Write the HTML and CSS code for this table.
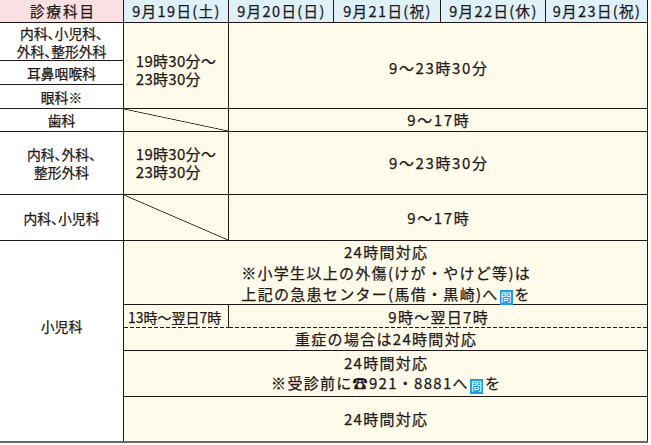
FILE: index.html
```html
<!DOCTYPE html>
<html lang="ja">
<head>
<meta charset="utf-8">
<title>診療科目</title>
<link rel="stylesheet" href="styles.css">
</head>
<body>
<div class="table">
  <div class="cell head dept-head"><span class="t">診療科目</span></div>
  <div class="cell head date"><span class="t">9月19日(土)</span></div>
  <div class="cell head date"><span class="t">9月20日(日)</span></div>
  <div class="cell head date"><span class="t">9月21日(祝)</span></div>
  <div class="cell head date"><span class="t">9月22日(休)</span></div>
  <div class="cell head date"><span class="t">9月23日(祝)</span></div>

  <div class="cell dept r2"><span class="t">内科、小児科、<br>外科、整形外科</span></div>
  <div class="cell dept r3"><span class="t">耳鼻咽喉科</span></div>
  <div class="cell dept r4"><span class="t">眼科※</span></div>
  <div class="cell dept r5"><span class="t">歯科</span></div>
  <div class="cell dept r6"><span class="t">内科、外科、<br>整形外科</span></div>
  <div class="cell dept r7"><span class="t">内科、小児科</span></div>
  <div class="cell dept r8 last shift"><span class="t">小児科</span></div>

  <div class="cell c19 r2to4 night"><span class="t">19時30分～<br>23時30分</span></div>
  <div class="cell wide r2to4 big lower"><span class="t">9～23時30分</span></div>
  <div class="cell c19 r5 diag"></div>
  <div class="cell wide r5 big"><span class="t">9～17時</span></div>
  <div class="cell c19 r6 night"><span class="t">19時30分～<br>23時30分</span></div>
  <div class="cell wide r6 big"><span class="t">9～23時30分</span></div>
  <div class="cell c19 r7 diag"></div>
  <div class="cell wide r7 big"><span class="t">9～17時</span></div>

  <div class="cell full r8 kids three"><span class="t">24時間対応<br>※小学生以上の外傷(けが・やけど等)は<br>上記の急患センター(馬借・黒崎)へ<span class="toi">問</span>を</span></div>
  <div class="cell c19 r9 left dashed"><span class="t">13時～翌日7時</span></div>
  <div class="cell wide r9 kids dashed"><span class="t">9時～翌日7時</span></div>
  <div class="cell full r10 kids"><span class="t">重症の場合は24時間対応</span></div>
  <div class="cell full r11 kids two"><span class="t">24時間対応<br>※受診前に☎921・8881へ<span class="toi">問</span>を</span></div>
  <div class="cell full r12 kids last"><span class="t">24時間対応</span></div>
</div>
</body>
</html>
```
FILE: styles.css
```css
* { box-sizing: border-box; }
html, body { margin: 0; padding: 0; background: #ffffff; }
body {
  font-family: "Noto Sans CJK JP", "Noto Sans", sans-serif;
  color: #231815;
  width: 651px;
  height: 445px;
  overflow: hidden;
}
.table {
  display: grid;
  grid-template-columns: 124px 105px 105px 107px 105px 102px;
  grid-template-rows: 23px 38px 24px 24px 23px 63px 46px 64px 23px 23px 46px 44px;
  width: 648px;
  border-bottom: 2px solid #6a6a6a;
}
.cell {
  border-right: 1px solid #231815;
  border-bottom: 1px solid #231815;
  background: #fffbeb;
  display: flex;
  align-items: center;
  justify-content: center;
  text-align: center;
  font-size: 14px;
  line-height: 18px;
  white-space: nowrap;
  -webkit-text-stroke: 0.25px #231815;
}
.t { display: block; }
.cell.last { border-bottom: none; }

.dept-head {
  background: #fae0e3;
  grid-column: 1;
  grid-row: 1;
  font-size: 14.5px;
  letter-spacing: 2px;
  justify-content: flex-start;
  padding-left: 30px;
}
.date {
  background: #def0f8;
  grid-row: 1;
  font-size: 14.5px;
  letter-spacing: 1.4px;
  padding-left: 1px;
}

.dept {
  grid-column: 1;
  background: #ffffff;
  font-size: 13.8px;
  font-feature-settings: "palt";
}
.r2 { grid-row: 2; }
.r3 { grid-row: 3; }
.r4 { grid-row: 4; }
.r5 { grid-row: 5; }
.r6 { grid-row: 6; }
.r7 { grid-row: 7; }
.r8 { grid-row: 8; }
.r9 { grid-row: 9; }
.r10 { grid-row: 10; }
.r11 { grid-row: 11; }
.r12 { grid-row: 12; }
.r2to4 { grid-row: 2 / 5; }
.dept.r8 { grid-row: 8 / 13; }
.shift { padding-bottom: 30px; }

.c19 { grid-column: 2; }
.wide { grid-column: 3 / 7; }
.full { grid-column: 2 / 7; }

.night { font-size: 15px; letter-spacing: 0.3px; }
.night .t { text-align: left; }
.r2to4.night { padding-top: 8px; }
.lower { padding-top: 4px; }

.big { font-size: 15px; letter-spacing: 1.6px; padding-left: 1.6px; }

.diag {
  background:
    linear-gradient(to top right, transparent calc(50% - 0.8px), #231815 50%, transparent calc(50% + 0.8px)),
    #fffbeb;
}

.kids { font-size: 15px; letter-spacing: 1.3px; padding-left: 1.3px; }
.three { line-height: 21px; }
.two { line-height: 20px; }
.left { justify-content: flex-start; padding-left: 4px; font-size: 14px; }

.dashed {
  border-bottom: none;
  background:
    linear-gradient(to right, #231815 4px, transparent 4px) left bottom / 6px 1px repeat-x,
    #fffbeb;
}

.toi {
  display: inline-block;
  width: 13px;
  height: 15px;
  line-height: 15px;
  background: #1b9fe0;
  color: #ffffff;
  -webkit-text-stroke: 0;
  font-size: 11px;
  letter-spacing: 0;
  text-align: center;
  vertical-align: -2px;
  margin: 0 2px 0 1px;
}
```
